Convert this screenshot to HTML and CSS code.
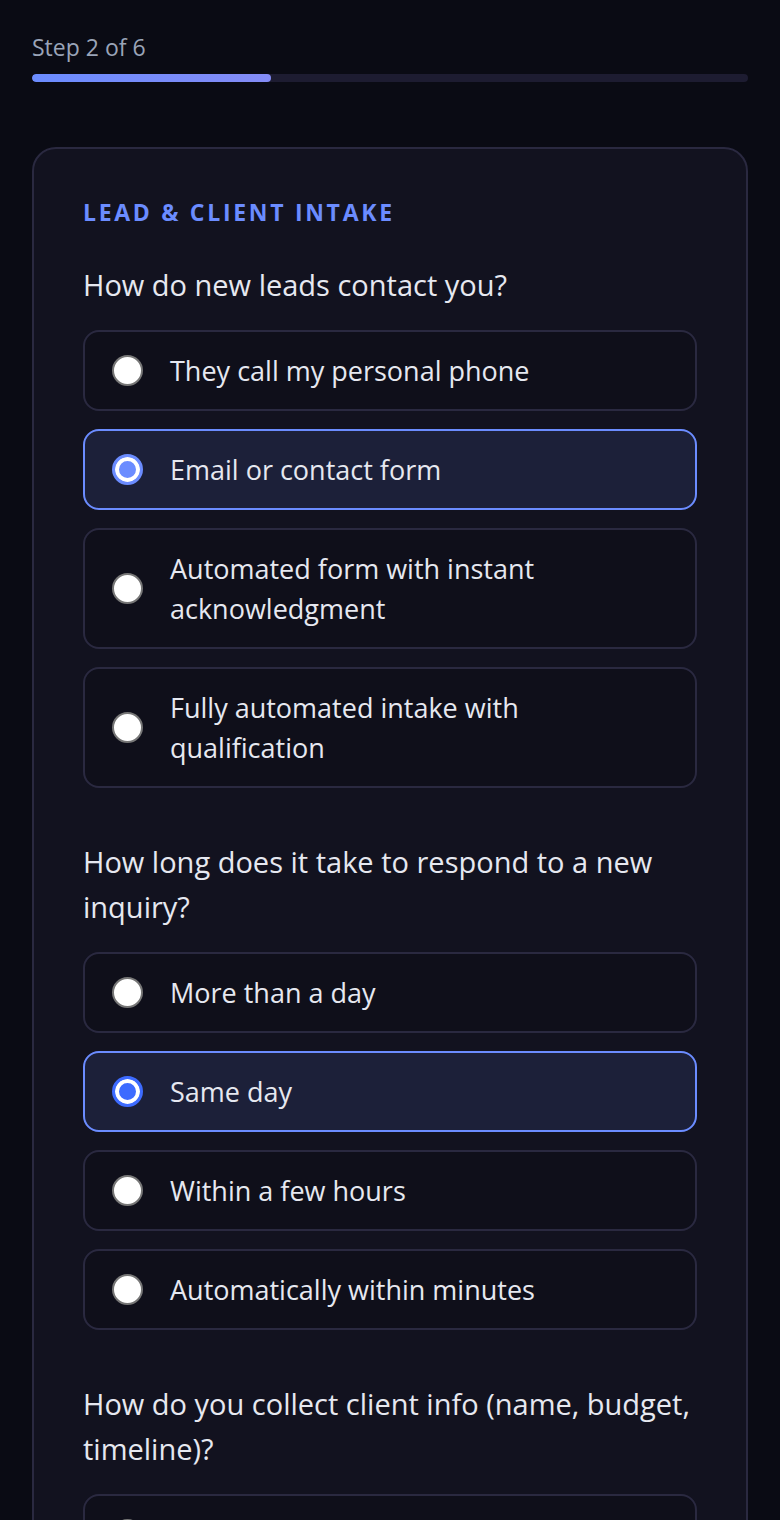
FILE: index.html
```html
<!DOCTYPE html>
<html lang="en">
<head>
    <meta charset="UTF-8">
    <meta name="viewport" content="width=device-width, initial-scale=1.0">
    <title>Workflow Assessment</title>
    <link rel="stylesheet" href="styles.css">
</head>
<body>
<div class="stepLabel">Step 2 of 6</div>
<div class="progress">
    <div class="progressFill" style="width: 33.33%"></div>
</div>

<form class="card">
    <h2 class="sectionTitle">Lead &amp; Client Intake</h2>

    <fieldset class="question">
        <legend class="questionText">How do new leads contact you?</legend>
        <label class="option">
            <input type="radio" name="contact" value="phone">
            <span>They call my personal phone</span>
        </label>
        <label class="option">
            <input type="radio" name="contact" value="email" checked>
            <span>Email or contact form</span>
        </label>
        <label class="option">
            <input type="radio" name="contact" value="autoform">
            <span>Automated form with instant acknowledgment</span>
        </label>
        <label class="option">
            <input type="radio" name="contact" value="intake">
            <span>Fully automated intake with qualification</span>
        </label>
    </fieldset>

    <fieldset class="question">
        <legend class="questionText">How long does it take to respond to a new inquiry?</legend>
        <label class="option">
            <input type="radio" name="response" value="day">
            <span>More than a day</span>
        </label>
        <label class="option">
            <input type="radio" name="response" value="same" class="focused" checked>
            <span>Same day</span>
        </label>
        <label class="option">
            <input type="radio" name="response" value="hours">
            <span>Within a few hours</span>
        </label>
        <label class="option">
            <input type="radio" name="response" value="minutes">
            <span>Automatically within minutes</span>
        </label>
    </fieldset>

    <fieldset class="question">
        <legend class="questionText">How do you collect client info (name, budget, timeline)?</legend>
        <label class="option">
            <input type="radio" name="collect" value="manual">
            <span>I ask them over the phone</span>
        </label>
        <label class="option">
            <input type="radio" name="collect" value="email">
            <span>Back-and-forth emails</span>
        </label>
    </fieldset>
</form>
</body>
</html>
```

FILE: styles.css
```css
body {
    background-color: #0a0b14; /* Near black page */
    color: #e6e8f0; /* Light text */
    font-family: "Open Sans", "Noto Sans", sans-serif;
    margin: 0;
    padding: 32px 32px 0;
}

.stepLabel {
    color: #9aa4b8; /* Muted step text */
    font-size: 23px;
    line-height: 30px;
}

.progress {
    background-color: #1d1c31; /* Track */
    height: 8px;
    border-radius: 4px;
    margin-top: 12px;
    overflow: hidden;
}

.progressFill {
    height: 100%;
    border-radius: 4px;
    background: linear-gradient(90deg, #6b8cff, #848cf6);
}

.card {
    background-color: #12121f; /* Card surface */
    border: 2px solid #2a2940;
    border-radius: 24px;
    margin-top: 65px;
    padding: 48px 49px;
}

.sectionTitle {
    color: #6b8cff; /* Accent blue */
    font-size: 23px;
    line-height: 30px;
    font-weight: 700;
    letter-spacing: 2.7px;
    text-transform: uppercase;
    margin: 0 0 35px;
}

.question {
    border: none;
    margin: 0 0 33px;
    padding: 0;
    min-width: 0;
}

.questionText {
    padding: 0;
    font-size: 29px;
    line-height: 45px;
    margin-bottom: 23px;
}

.option {
    display: flex;
    align-items: center;
    gap: 27px;
    background-color: #0f0f1a; /* Slightly darker than card */
    border: 2px solid #2a2940;
    border-radius: 16px;
    padding: 18.5px 27px;
    margin-bottom: 18px;
    font-size: 27px;
    line-height: 40px;
    cursor: pointer;
}

.option:has(input:checked) {
    background-color: #1c2039; /* Selected row */
    border-color: #6b8cff;
}

.option input {
    appearance: none;
    flex: none;
    width: 31px;
    height: 31px;
    margin: 0;
    border-radius: 50%;
    background-color: #ffffff;
    border: 2px solid #767676; /* Gray ring like native radio */
    cursor: pointer;
}

.option input:checked {
    border: 3px solid #6b8cff;
    background-color: #6b8cff;
    box-shadow: inset 0 0 0 4px #ffffff;
}

.option input.focused:checked {
    border-color: #3d6bff; /* Stronger blue on the active control */
    background-color: #3d6bff;
}
```
